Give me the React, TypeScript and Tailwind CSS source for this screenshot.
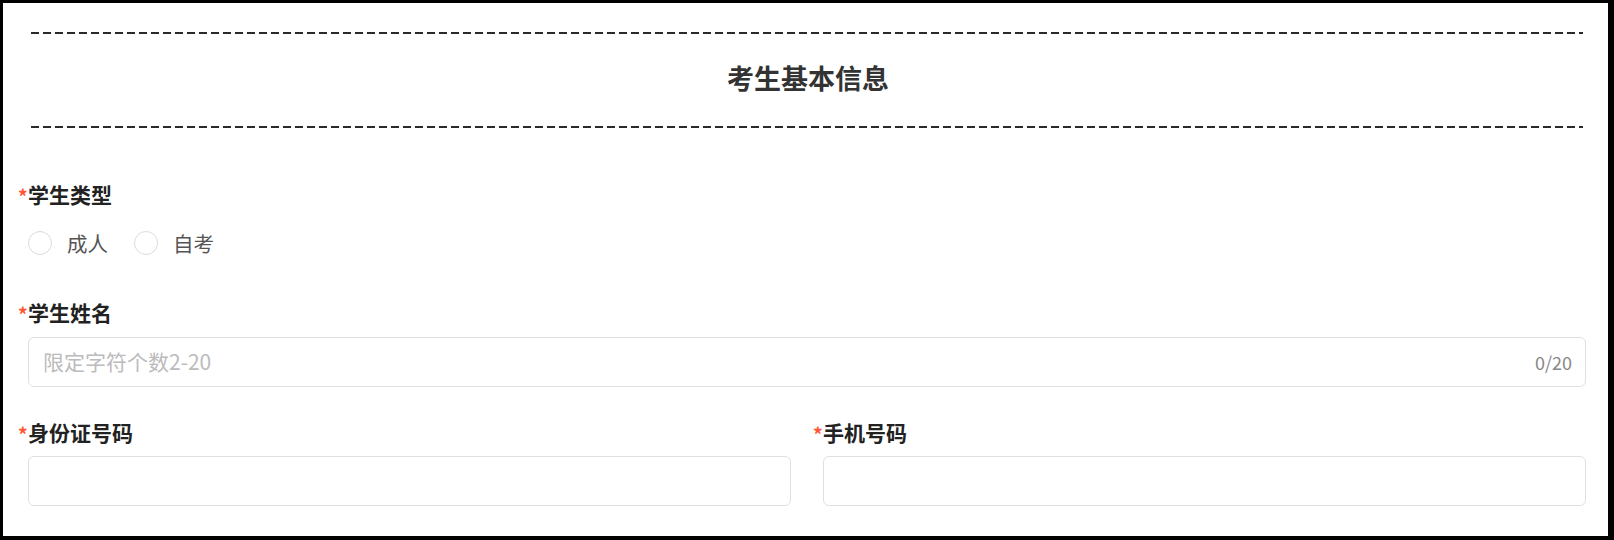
const dashed =
  "h-[2px] mx-[3px] bg-[repeating-linear-gradient(to_right,#2a2a2a_0_8px,transparent_8px_12px)]";

function Label({ text }: { text: string }) {
  return (
    <div className="h-[28px] leading-[28px] text-[21px] font-bold text-[#222]">
      <span className="-ml-[10px] inline-block w-[10px] text-[19px] text-[#ff5533] align-top leading-[32px]">*</span>
      {text}
    </div>
  );
}

function Radio({ label }: { label: string }) {
  return (
    <label className="flex items-center gap-[15px] cursor-pointer">
      <span className="w-[24px] h-[24px] rounded-full border border-[#dcdcdc] bg-white" />
      <span className="text-[20.5px] leading-[28px] text-[#555]">{label}</span>
    </label>
  );
}

export default function App() {
  return (
    <div className="w-[1614px] h-[540px] bg-black pt-[3px] pl-[3px] pr-[6px] pb-[4px] font-['Noto_Sans_CJK_SC','Noto_Sans',sans-serif]">
      <div className="h-full bg-white pl-[25px] pr-[22px] pt-[29px]">
        <div className={dashed} />
        <h2 className="text-center text-[27px] leading-[36px] font-bold text-[#333] pt-[26px] pb-[30px] pl-[2px]">
          考生基本信息
        </h2>
        <div className={dashed} />

        <div className="mt-[52px]">
          <Label text="学生类型" />
          <div className="mt-[21px] flex items-center gap-[26px]">
            <Radio label="成人" />
            <Radio label="自考" />
          </div>
        </div>

        <div className="mt-[41px]">
          <Label text="学生姓名" />
          <div className="mt-[11px] h-[50px] rounded-[6px] border border-[#e0e0e0] flex items-center pl-[14px] pr-[13px]">
            <input
              className="flex-1 outline-none text-[21px] text-[#333] placeholder:text-[#bbb] bg-transparent"
              placeholder="限定字符个数2-20"
            />
            <span className="text-[18px] text-[#888]">0/20</span>
          </div>
        </div>

        <div className="mt-[31px] grid grid-cols-2 gap-[32px]">
          <div>
            <Label text="身份证号码" />
            <div className="mt-[10px] h-[50px] rounded-[6px] border border-[#e0e0e0]" />
          </div>
          <div>
            <Label text="手机号码" />
            <div className="mt-[10px] h-[50px] rounded-[6px] border border-[#e0e0e0]" />
          </div>
        </div>
      </div>
    </div>
  );
}
